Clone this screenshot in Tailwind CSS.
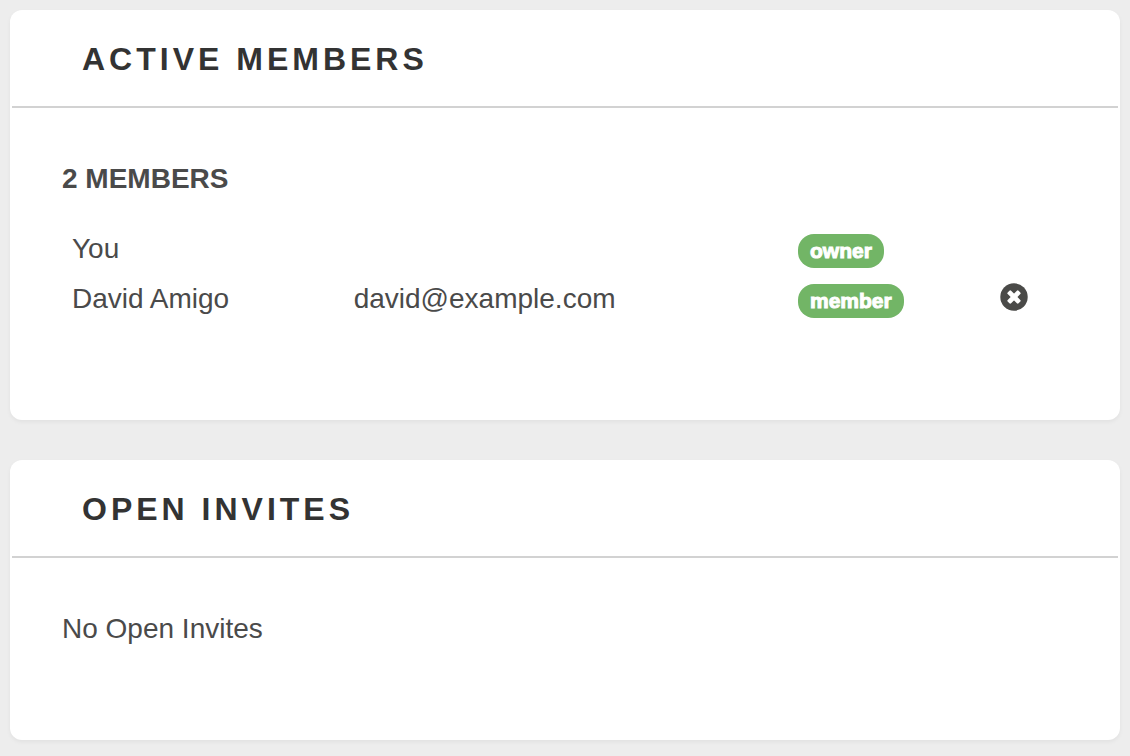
<!doctype html>
<html lang="en">
<head>
    <meta charset="UTF-8">
    <meta name="viewport" content="width=device-width, initial-scale=1.0">
    <title>Team Members</title>
    <script src="https://cdn.jsdelivr.net/npm/@tailwindcss/browser@4"></script>
</head>
<body class="bg-[#ededed] text-[#4a4a4a] font-['Liberation_Sans',Arial,sans-serif] text-[28px] leading-10">

<main class="flex flex-col gap-10 p-2.5">
    <section class="bg-white rounded-xl shadow-[0_2px_4px_rgba(0,0,0,0.05)] p-0.5">
        <header class="border-b-2 border-[#d2d2d2] px-[70px] py-[27px]">
            <h2 class="text-[32px] leading-10 font-bold tracking-[4px] text-[#333] uppercase">Active Members</h2>
        </header>
        <div class="px-[50px] pt-[51px] pb-[89px]">
            <h3 class="font-bold uppercase mb-[25px]">2 Members</h3>
            <table class="w-full table-fixed mb-[5px]">
                <colgroup>
                    <col class="w-[28%]">
                    <col>
                    <col class="w-[202px]">
                    <col class="w-[78px]">
                </colgroup>
                <tbody>
                <tr class="h-[50px]">
                    <td class="px-2.5">You</td>
                    <td class="px-2.5"></td>
                    <td class="px-2.5">
                        <span class="block w-fit bg-[#72b566] text-white text-[21px] leading-[34px] font-bold [-webkit-text-stroke:1px_white] rounded-2xl px-3 mt-1">owner</span>
                    </td>
                    <td class="px-2.5"></td>
                </tr>
                <tr class="h-[50px]">
                    <td class="px-2.5">David Amigo</td>
                    <td class="px-2.5">david@example.com</td>
                    <td class="px-2.5">
                        <span class="block w-fit bg-[#72b566] text-white text-[21px] leading-[34px] font-bold [-webkit-text-stroke:1px_white] rounded-2xl px-3 mt-1">member</span>
                    </td>
                    <td class="px-2.5">
                        <button type="button" aria-label="Remove David Amigo" class="block cursor-pointer mb-1">
                            <svg class="size-7" viewBox="0 0 28 28">
                                <circle cx="14" cy="14" r="13.7" fill="#4a4a48"/>
                                <g fill="#fff" transform="rotate(45 14 14)">
                                    <rect x="6.3" y="11.6" width="15.4" height="4.8" rx="1.2"/>
                                    <rect x="11.6" y="6.3" width="4.8" height="15.4" rx="1.2"/>
                                </g>
                            </svg>
                        </button>
                    </td>
                </tr>
                </tbody>
            </table>
        </div>
    </section>

    <section class="bg-white rounded-xl shadow-[0_2px_4px_rgba(0,0,0,0.05)] p-0.5">
        <header class="border-b-2 border-[#d2d2d2] px-[70px] py-[27px]">
            <h2 class="text-[32px] leading-10 font-bold tracking-[4px] text-[#333] uppercase">Open Invites</h2>
        </header>
        <div class="px-[50px] pt-[51px] pb-[89px]">
            <p>No Open Invites</p>
        </div>
    </section>
</main>

</body>
</html>
